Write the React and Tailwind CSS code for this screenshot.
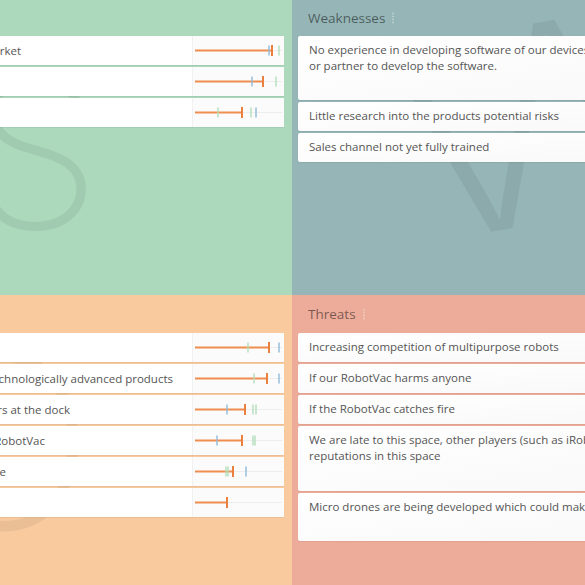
const strengths = [
  { text: "Leading position in the robot vacuum market", end: 21, line: 80, blue: [77], green: [87] },
  { text: "Strong brand and loyal customer base", end: -30, line: 71, blue: [60], green: [84] },
  { text: "Experienced hardware engineering team", end: -40, line: 50, blue: [64], green: [26, 59] },
];

const opportunities = [
  { text: "Growing demand for smart home devices", end: -25, line: 77, blue: [87], green: [56] },
  { text: "Customers want technologically advanced products", end: 173, line: 75, blue: [87], green: [62] },
  { text: "Self-emptying station with sensors at the dock", end: 70, line: 53, blue: [35], green: [61, 64] },
  { text: "Add a security camera to the RobotVac", end: 45, line: 50, blue: [25], green: [61, 63] },
  { text: "Help the elderly stay longer at home", end: 6, line: 41, blue: [54], green: [34, 36] },
  { text: "Lower production costs in Asia", end: -30, line: 35, blue: [], green: [] },
];

const weaknesses = [
  { lines: ["No experience in developing software of our devices. We need to hire", "or partner to develop the software."], h: "h-[64px]" },
  { lines: ["Little research into the products potential risks"], h: "h-[29px]" },
  { lines: ["Sales channel not yet fully trained"], h: "h-[29px]" },
];

const threats = [
  { lines: ["Increasing competition of multipurpose robots"], h: "h-[29px]" },
  { lines: ["If our RobotVac harms anyone"], h: "h-[29px]" },
  { lines: ["If the RobotVac catches fire"], h: "h-[29px]" },
  { lines: ["We are late to this space, other players (such as iRobot) already have strong", "reputations in this space"], h: "h-[65px]" },
  { lines: ["Micro drones are being developed which could make our RobotVac obsolete"], h: "h-[48px]" },
];

function Chart({ line, blue, green }) {
  return (
    <div className="w-[92px] h-full shrink-0 border-l border-[#f1f1f1] bg-[#fbfbfb]">
      <svg width="91" height="29" viewBox="0 0 91 29">
        <line x1="2" y1="14.5" x2="89" y2="14.5" stroke="#ededed" strokeWidth="1" />
        <line x1="2" y1="14.5" x2={line - 1} y2="14.5" stroke="#ef8d50" strokeWidth="2" />
        {green.map((x, i) => (
          <line key={"g" + i} x1={x - 1} x2={x - 1} y1="9.5" y2="19.5" stroke="#b3dfbb" strokeWidth="1.4" />
        ))}
        {blue.map((x, i) => (
          <line key={"b" + i} x1={x - 1} x2={x - 1} y1="9.5" y2="19.5" stroke="#8fbbd9" strokeWidth="1.4" />
        ))}
        <line x1={line - 1} x2={line - 1} y1="9" y2="20" stroke="#e9803f" strokeWidth="2" />
      </svg>
    </div>
  );
}

function RatedCard({ item }) {
  return (
    <div className="flex h-[29px] w-full rounded-[2px] bg-white shadow-[0_1px_1px_rgba(0,0,0,0.06)]">
      <div className="flex flex-1 min-w-0 items-center justify-end">
        <span className="whitespace-nowrap text-[#555]" style={{ paddingRight: 192 - item.end }}>
          {item.text}
        </span>
      </div>
      <Chart line={item.line} blue={item.blue} green={item.green} />
    </div>
  );
}

function TextCard({ item }) {
  return (
    <div className={`${item.h} w-[420px] rounded-[2px] bg-gradient-to-br from-white to-[#f8f8f8] pl-[11px] pt-[6px] leading-[16px] text-[#555] shadow-[0_1px_1px_rgba(0,0,0,0.06)]`}>
      {item.lines.map((l, i) => (
        <div key={i} className="whitespace-nowrap">{l}</div>
      ))}
    </div>
  );
}

function Handle() {
  return (
    <svg width="4" height="12" viewBox="0 0 4 12" className="ml-[6px]">
      <circle cx="2" cy="1.5" r="1" fill="rgba(255,255,255,0.35)" />
      <circle cx="2" cy="4.5" r="1" fill="rgba(255,255,255,0.35)" />
      <circle cx="2" cy="7.5" r="1" fill="rgba(255,255,255,0.35)" />
      <circle cx="2" cy="10.5" r="1" fill="rgba(255,255,255,0.35)" />
    </svg>
  );
}

export default function App() {
  return (
    <div className="grid h-[585px] w-[585px] grid-cols-[292px_293px] grid-rows-[295px_290px] overflow-hidden font-['Open_Sans',sans-serif] text-[11.5px]">
      {/* Strengths */}
      <div className="relative overflow-hidden bg-[#acd8bc]">
        <span aria-hidden="true" className="absolute left-[-30px] top-[47px] font-['Inter',sans-serif] text-[210px] font-extralight leading-none text-black/[0.06]">S</span>
        <div className="relative ml-[-400px] mr-[8px] mt-[36px] flex flex-col gap-[2px]">
          {strengths.map((s, i) => (
            <RatedCard key={i} item={s} />
          ))}
        </div>
      </div>

      {/* Weaknesses */}
      <div className="relative overflow-hidden bg-[#95b5b6]">
        <span aria-hidden="true" className="absolute left-[140px] top-[-17px] rotate-[-10deg] scale-x-[1.35] font-['Inter',sans-serif] text-[272px] font-extralight leading-none text-black/[0.06]">W</span>
        <div className="relative flex h-[36px] items-center pl-[16px] text-[13.5px] text-black/50">
          Weaknesses
          <Handle />
        </div>
        <div className="relative flex flex-col gap-[2px] pl-[6px]">
          {weaknesses.map((w, i) => (
            <TextCard key={i} item={w} />
          ))}
        </div>
      </div>

      {/* Opportunities */}
      <div className="relative overflow-hidden bg-[#f8ca9d]">
        <span aria-hidden="true" className="absolute left-[-86px] top-[27px] font-['Inter',sans-serif] text-[240px] font-extralight leading-none text-black/[0.05]">O</span>
        <div className="relative ml-[-400px] mr-[8px] mt-[38px] flex flex-col gap-[2px]">
          {opportunities.map((s, i) => (
            <RatedCard key={i} item={s} />
          ))}
        </div>
      </div>

      {/* Threats */}
      <div className="relative overflow-hidden bg-[#edac9a]">
        <div className="relative flex h-[38px] items-center pl-[16px] text-[13.5px] text-black/50">
          Threats
          <Handle />
        </div>
        <div className="relative flex flex-col gap-[2px] pl-[6px]">
          {threats.map((t, i) => (
            <TextCard key={i} item={t} />
          ))}
        </div>
      </div>
    </div>
  );
}
